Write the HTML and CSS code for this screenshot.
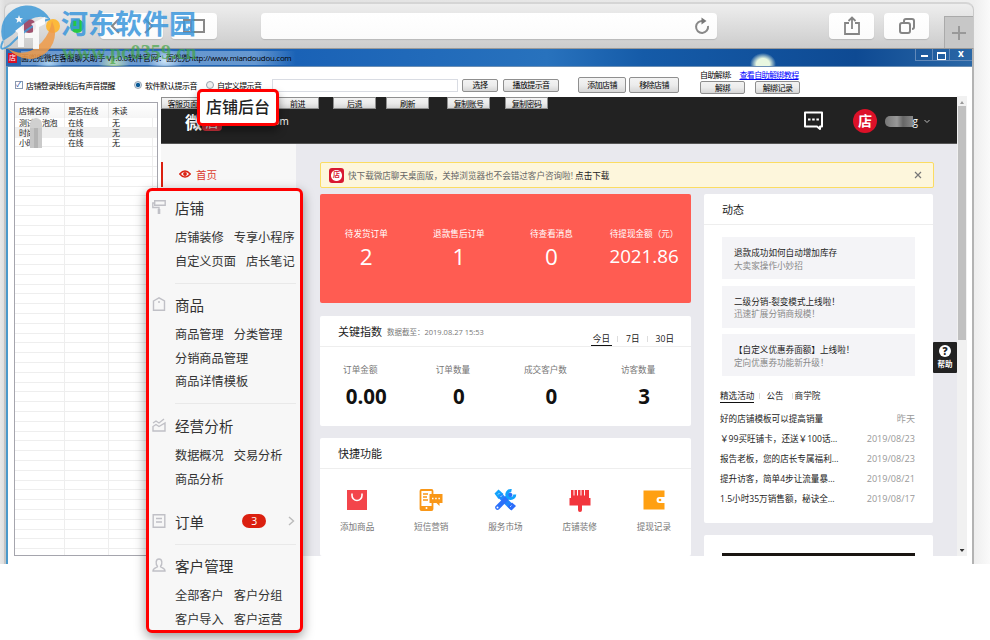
FILE: index.html
```html
<!DOCTYPE html>
<html lang="zh-CN">
<head>
	<meta charset="utf-8">
	<title>店铺后台</title>
	<link rel="stylesheet" href="styles.css">
</head>
<body>
	<div class="browser">
		<div class="chrome">
			<i class="light red"></i>
			<i class="light orange"></i>
			<i class="light green"></i>
			<div class="btn nav">
				<svg width="50" height="20" viewBox="0 0 50 20"><path d="M12 3 5 10l7 7M38 3l7 7-7 7" fill="none" stroke="#888" stroke-width="2"/></svg>
			</div>
			<div class="btn side">
				<svg width="24" height="16" viewBox="0 0 24 16"><path d="M2 2h20v12H2zM9 2v12" fill="none" stroke="#888" stroke-width="2"/></svg>
			</div>
			<div class="btn address">
				<svg width="18" height="18" viewBox="0 0 18 18"><path d="M10 4A6 6 0 1 0 15 9" fill="none" stroke="#888" stroke-width="2"/><path d="M8.500 .5 13.500 4 8.500 7.500z" fill="#777"/></svg>
			</div>
			<div class="btn share">
				<svg width="18" height="20" viewBox="0 0 18 20"><path d="M6 7H2v11h14V7h-4M9 13V2M5.500 5 9 1.500 12.500 5" fill="none" stroke="#858585" stroke-width="1.800"/></svg>
			</div>
			<div class="btn tabs">
				<svg width="18" height="18" viewBox="0 0 18 18"><rect x="2" y="6" width="10" height="10" rx="2" fill="none" stroke="#858585" stroke-width="2"/><path d="M6 5V4q0-2 2-2h6q2 0 2 2v6q0 2-2 2" fill="none" stroke="#858585" stroke-width="2"/></svg>
			</div>
			<div class="newtab">
				<svg width="14" height="14" viewBox="0 0 14 14"><path d="M7 0v14M0 7h14" stroke="#999" stroke-width="2"/></svg>
			</div>
		</div>

		<div class="app">
			<div class="titlebar">
				<span class="logo">店</span>
				<span class="name">面兜兜微店客服聊天助手 V1.0.0软件官网：面兜兜http://www.miandoudou.com</span>
				<span class="win"><b class="min"></b><b class="max"></b><b class="close">x</b></span>
			</div>

			<div class="toolbar">
				<i class="check">✓</i>
				<label class="t1">店铺登录掉线后有声音提醒</label>
				<i class="radio on"></i>
				<label class="t2">软件默认提示音</label>
				<i class="radio"></i>
				<label class="t3">自定义提示音</label>
				<div class="path"></div>
				<button class="b1">选择</button>
				<button class="b2">播放提示音</button>
				<button class="b3">添加店铺</button>
				<button class="b4">移除店铺</button>
				<div class="unbind">
					<p>自助解绑: <a href="javascript:;">查看自助解绑教程</a></p>
					<button>解绑</button><button>解绑记录</button>
				</div>
			</div>

			<div class="work">
				<div class="shops">
					<div class="row head"><span>店铺名称</span><span>是否在线</span><span>未读</span></div>
					<div class="row"><span>测试<em></em>泡泡</span><span>在线</span><span>无</span></div>
					<div class="row sel"><span>时尚<em></em></span><span>在线</span><span>无</span></div>
					<div class="row"><span>小时<em></em></span><span>在线</span><span>无</span></div>
				</div>

				<div class="page">
					<div class="top">
						<div class="tools">
							<button>客服页面</button><button>前进</button><button>后退</button><button>刷新</button><button>复制账号</button><button>复制密码</button>
						</div>
						<div class="brand">
							<span class="wei">微</span><span class="dian">店</span><span class="com">.com</span>
							<svg class="chat" width="21" height="20" viewBox="0 0 21 20"><path d="M2 1.500h17v14h-2v2.500l-3-2.500H2z" fill="none" stroke="#fff" stroke-width="2" stroke-linejoin="round"/><path d="M5 8.500h2.500M9.200 8.500h2.500M13.400 8.500h2.500" stroke="#fff" stroke-width="2.200"/></svg>
							<span class="avatar">店</span>
							<span class="user">g</span>
							<svg class="down" width="6" height="5" viewBox="0 0 6 5"><path d="M.5 1 3 3.500 5.500 1" fill="none" stroke="#bbb"/></svg>
						</div>
					</div>
					<div class="content">
						<div class="home">
							<svg width="12" height="8" viewBox="0 0 12 8"><path d="M.8 4Q6-2.200 11.200 4 6 10.200.8 4z" fill="none" stroke="#db2010" stroke-width="1.500"/><circle cx="6" cy="4" r="1.900" fill="#db2010"/></svg>
							<span>首页</span>
						</div>
						<div class="main">
							<div class="notice">
								<span class="ico">店</span>
								<p>快下载微店聊天桌面版，关掉浏览器也不会错过客户咨询啦! <b>点击下载</b></p>
								<svg width="8" height="8" viewBox="0 0 8 8"><path d="M1 1l6 6M7 1 1 7" stroke="#777" stroke-width="1.200"/></svg>
							</div>
							<div class="cols">
								<div class="left">
									<div class="todo">
										<div><span>待发货订单</span><b>2</b></div>
										<div><span>退款售后订单</span><b>1</b></div>
										<div><span>待查看消息</span><b>0</b></div>
										<div><span>待提现金额（元）</span><b class="money">2021.86</b></div>
									</div>
									<div class="card index">
										<div class="hd"><h3>关键指数</h3><small>数据截至：2019.08.27 15:53</small>
											<div class="days"><span class="on">今日</span><span>7日</span><span>30日</span></div>
										</div>
										<div class="nums">
											<div><span>订单金额</span><b>0.00</b></div>
											<div><span>订单数量</span><b>0</b></div>
											<div><span>成交客户数</span><b>0</b></div>
											<div><span>访客数量</span><b>3</b></div>
										</div>
									</div>
									<div class="card quick">
										<div class="hd"><h3>快捷功能</h3></div>
										<div class="icons">
											<div>
												<svg width="24" height="24" viewBox="0 0 24 24"><path d="M2 2h20v20H2z" fill="#f3454b"/><path d="M7 5.500v2a5 5 0 0 0 10 0v-2" fill="none" stroke="#fff" stroke-width="1.600"/></svg>
												<span>添加商品</span>
											</div>
											<div>
												<svg width="24" height="24" viewBox="0 0 24 24"><rect x="1.500" y="2" width="12" height="20" rx="1" fill="#fff" stroke="#f99717" stroke-width="1.800"/><path d="M1 18h13v4H1z" fill="#f99717"/><circle cx="7.500" cy="20" r="1" fill="#fff"/><path d="M4 6h5M4 9h4M4 12h5" stroke="#f99717" stroke-width="1.400"/><path d="M10.500 6h13v9h-3v3l-3-3h-7z" fill="#f99717"/><path d="M13 10.500h1.500M16.200 10.500h1.500M19.400 10.500h1.500" stroke="#fff" stroke-width="1.500"/></svg>
												<span>短信营销</span>
											</div>
											<div>
												<svg width="24" height="24" viewBox="0 0 24 24"><path d="M1.500 5.500 5.500 1.500l5 4.500-5 5z" fill="#12a2fc"/><path d="M7 7.500 19.500 20" stroke="#1f86fb" stroke-width="5.500"/><path d="M14.500 18.500l4 4 4.500-4.500-4-3.500z" fill="#2b6cfa"/><path d="M4.500 19.500 17 7" stroke="#2b70fa" stroke-width="4.600" stroke-linecap="round"/><path d="M18.500 2.600a4 4 0 1 0 3.300 4" fill="none" stroke="#10a3fc" stroke-width="3"/><circle cx="4.500" cy="19.500" r="1" fill="#fff"/><path d="M6.500 5l-1.500 1.500M9 7.500 7.500 9M18.500 17.500 17 19" stroke="#fff" stroke-width=".7"/></svg>
												<span>服务市场</span>
											</div>
											<div>
												<svg width="24" height="24" viewBox="0 0 24 24"><path d="M3 2h18v8h1.500v7.500H14V22a2 2 0 0 1-4 0v-4.500H1.500V10H3z" fill="#f2353c"/><path d="M6 2v5.500M9.500 2v5.500M13 2v5.500M16.500 2v5.500" stroke="#fff"/></svg>
												<span>店铺装修</span>
											</div>
											<div>
												<svg width="24" height="24" viewBox="0 0 24 24"><path d="M1.500 2.500h21V9h-5a3 3 0 0 0 0 6h5v6.500h-21z" fill="#ffa012"/><circle cx="18" cy="12" r="1.300" fill="#ffa012"/></svg>
												<span>提现记录</span>
											</div>
										</div>
									</div>
								</div>
								<div class="right">
									<div class="card news">
										<div class="hd"><h3>动态</h3></div>
										<div class="tips">
											<div><p>退款成功如何自动增加库存</p><span>大卖家操作小妙招</span></div>
											<div><p>二级分销-裂变模式上线啦！</p><span>迅速扩展分销商规模！</span></div>
											<div><p>【自定义优惠券面额】上线啦！</p><span>定向优惠券功能新升级！</span></div>
										</div>
										<div class="tabs2"><span class="on">精选活动</span><span>公告</span><span>商学院</span></div>
										<ul>
											<li>好的店铺模板可以提高销量<time>昨天</time></li>
											<li>￥99买旺铺卡，还送￥100话...<time>2019/08/23</time></li>
											<li>报告老板，您的店长专属福利...<time>2019/08/23</time></li>
											<li>提升访客，简单4步让流量暴...<time>2019/08/21</time></li>
											<li>1.5小时35万销售额，秘诀全...<time>2019/08/17</time></li>
										</ul>
									</div>
									<div class="card banner"><div></div></div>
								</div>
							</div>
						</div>
					</div>
				</div>
				<div class="scroll"><i class="up"></i><div class="thumb"></div><i class="dn"></i></div>
			</div>
		</div>
	</div>

	<div class="help"><b>?</b><span>帮助</span></div>

	<div class="menu">
		<div class="sec s1">
			<h4><svg width="14" height="14" viewBox="0 0 14 14"><path d="M2.700.8h10.500v4.400H2.700zM2.700 3H.8v4.500H7V10" fill="none" stroke="#c0c0c6" stroke-width="1.400"/><path d="M7 9v5" stroke="#c0c0c6" stroke-width="2.600"/></svg>店铺</h4>
			<p><a>店铺装修</a><a>专享小程序</a></p>
			<p><a>自定义页面</a><a>店长笔记</a></p>
		</div>
		<div class="sec s2">
			<h4><svg width="14" height="14" viewBox="0 0 14 14"><path d="M1.500 4 7 .8 12.500 4v9.200h-11z" fill="none" stroke="#c0c0c6" stroke-width="1.400"/><circle cx="7" cy="5" r="1" fill="#c0c0c6"/></svg>商品</h4>
			<p><a>商品管理</a><a>分类管理</a></p>
			<p><a>分销商品管理</a></p>
			<p><a>商品详情模板</a></p>
		</div>
		<div class="sec s3">
			<h4><svg width="14" height="14" viewBox="0 0 14 14"><path d="M1 5l3-2 3 2 5-4M1 13V8.500L4 6.500 7 8.500 13 5v8z" fill="none" stroke="#c0c0c6" stroke-width="1.400"/></svg>经营分析</h4>
			<p><a>数据概况</a><a>交易分析</a></p>
			<p><a>商品分析</a></p>
		</div>
		<div class="sec s4">
			<h4><svg width="14" height="14" viewBox="0 0 14 14"><path d="M1.200.8h11.600v12.400H1.200zM4 4.500h6M4 8h6" fill="none" stroke="#c0c0c6" stroke-width="1.400"/></svg>订单<span class="count">3</span><svg class="go" width="7" height="10" viewBox="0 0 7 10"><path d="M1 1l4.500 4L1 9" fill="none" stroke="#bbb" stroke-width="1.400"/></svg></h4>
		</div>
		<div class="sec s5">
			<h4><svg width="14" height="14" viewBox="0 0 14 14"><path d="M5.500 8.500C3.500 6 3.500 1 7 1s3.500 5 1.500 7.500c0 1.500 4.500 1 4.500 4.500H1c0-3.500 4.500-3 4.500-4.500z" fill="none" stroke="#c0c0c6" stroke-width="1.400"/></svg>客户管理</h4>
			<p><a>全部客户</a><a>客户分组</a></p>
			<p><a>客户导入</a><a>客户运营</a></p>
		</div>
	</div>

	<div class="callout">店铺后台</div>

	<div class="mark">
		<svg width="58" height="58" viewBox="0 0 58 58">
			<path d="M3 37A26 26 0 0 1 50 15Q34 8 20 24 12 32 3 37z" fill="#3f9ad8"/>
			<path d="M7 44Q26 56 42 38 50 29 52 17 60 34 47 48 27 64 7 44z" fill="#f09b48"/>
			<path d="M3 37Q-3 50 10 41 30 20 50 15" fill="none" stroke="#3f9ad8" stroke-width="2"/>
			<path d="M15 27l9-7v23h-6V29zM31 20l14-7v7l-6 3v22h-6V34h-8v-5h8v-7z" fill="#fff"/>
			<path d="M19 11l1 3 3 .2-2.300 1.800.8 3-2.500-1.700-2.500 1.700.8-3-2.300-1.800 3-.2z" fill="#fff"/>
		</svg>
		<div class="cn">河东软件园</div>
		<div class="url">www.pc0359.cn</div>
	</div>
</body>
</html>
```
FILE: styles.css
```css
* {
	margin: 0;
	padding: 0;
	box-sizing: border-box;
}
body {
	position: relative;
	width: 990px;
	height: 640px;
	overflow: hidden;
	background: #fff;
	font-family: "Open Sans", "Noto Sans CJK SC", sans-serif;
	font-size: 8.6px;
	color: #222;
	white-space: nowrap;
}
i, em {
	font-style: normal;
}
svg {
	flex: none;
}
ul {
	list-style: none;
}
.browser {
	width: 990px;
	height: 564px;
	padding: 2px 15px 0 4px;
	background: linear-gradient(90deg, #e8e8e8 0, #ddd 5px, #eee 974px, #fafafa 990px);
}
.chrome {
	display: flex;
	align-items: center;
	width: 970px;
	height: 47px;
	padding-left: 17px;
	border: 1px solid #c9c9c9;
	border-top: 2px solid #d5d5d5;
	border-bottom: 1px solid #999;
	border-radius: 8px 8px 0 0;
	background: linear-gradient(#eee, #ccc);
}
.light {
	width: 14px;
	height: 14px;
	border-radius: 50%;
	margin-right: 10px;
}
.light.red {
	background: #a0506e;
}
.light.orange {
	background: #fcb93b;
}
.light.green {
	background: #26c843;
}
.btn {
	display: flex;
	align-items: center;
	justify-content: center;
	height: 26px;
	border-radius: 4px;
	background: linear-gradient(#fff, #fbfbfb);
	box-shadow: 0 1px 1px rgba(0, 0, 0, .12);
}
.btn.nav {
	width: 63px;
	margin-left: 6px;
}
.btn.side {
	width: 46px;
	margin-left: 8px;
}
.btn.address {
	justify-content: flex-end;
	width: 456px;
	margin-left: 44px;
	padding-right: 6px;
}
.btn.share {
	width: 45px;
	margin-left: 112px;
}
.btn.tabs {
	width: 45px;
	margin-left: 10px;
}
.newtab {
	display: flex;
	align-items: center;
	justify-content: center;
	align-self: flex-end;
	width: 29px;
	height: 32px;
	margin-left: 15px;
	border: 1px solid #aaa;
	border-bottom: 0;
	border-right: 0;
	background: #c7c7c7;
}
.app {
	width: 970px;
	height: 515px;
	border-left: 2px solid #c4c4c4;
	border-right: 2px solid #b3b3b3;
	background: #fff;
	box-shadow: inset 2px 0 #4a98ca;
}
.titlebar {
	display: flex;
	align-items: center;
	height: 18px;
	padding-left: 2px;
	border-bottom: 1px solid #6b8fb5;
	background: radial-gradient(ellipse 16px 9px at 108px 14px, #c2e58d, transparent), radial-gradient(ellipse 18px 12px at 159px 12px, #d7efff, transparent), radial-gradient(ellipse 14px 9px at 43px 14px, #9dcdf1, transparent), radial-gradient(ellipse 13px 11px at 757px 15px, #e8f7e0 50%, transparent), linear-gradient(90deg, #2a67b2, #1a62b6 30%, #2872bd 56%, #155ba8 66%, #0e4a93 88%, #2a67a6);
}
.logo {
	width: 9px;
	height: 10px;
	background: #d7112a;
	color: #fff;
	font-size: 7px;
	line-height: 10px;
	text-align: center;
}
.name {
	width: 275px;
	margin-left: 4px;
	background: linear-gradient(90deg, rgba(190, 215, 240, .45) 85%, rgba(190, 215, 240, 0));
	color: #000;
	font-size: 7.900px;
	letter-spacing: -.25px;
	line-height: 14px;
}
.win {
	display: flex;
	align-self: flex-start;
	height: 12px;
	margin-left: auto;
	border: 1px solid #6289b9;
	border-top: 0;
	border-right: 0;
}
.win b {
	width: 17px;
	border-right: 1px solid #6289b9;
	color: #fff;
}
.win .min::after, .win .max::after {
	content: "";
	display: block;
	width: 7px;
	height: 2px;
	margin: 6px auto 0;
	background: #fff;
}
.win .max::after {
	height: 5px;
	margin-top: 3px;
	border: 1px solid #fff;
	border-top-width: 2px;
	background: none;
}
.win .close {
	width: 22px;
	border: 0;
	font-size: 10px;
	line-height: 9px;
	text-align: center;
}
.toolbar {
	display: flex;
	align-items: center;
	height: 29px;
	padding: 7px 0 0 9px;
}
.toolbar > * {
	flex: none;
}
.check {
	width: 8px;
	height: 8px;
	border: 1px solid #8a9ab0;
	color: #23439a;
	font-size: 7px;
	line-height: 6px;
}
.toolbar label {
	font-size: 8px;
	letter-spacing: -.6px;
	margin-left: 3px;
	color: #000;
}
.t1 {
	width: 108px;
}
.t2 {
	width: 61px;
}
.t3 {
	width: 55px;
}
.radio {
	width: 8px;
	height: 8px;
	border: 1px solid #9aa4ae;
	border-radius: 50%;
	background: #eee;
}
.radio.on {
	background: radial-gradient(circle, #0a5a96 40%, #cde 60%);
}
.path {
	width: 186px;
	height: 13px;
	border: 1px solid #d9dce3;
	margin-right: 4px;
}
button {
	display: block;
	flex: none;
	height: 13px;
	border: 1px solid #8f8f8f;
	border-radius: 2px;
	background: linear-gradient(#f3f3f3, #ececec 50%, #d6d6d6);
	color: #000;
	font-family: inherit;
	font-size: 8px;
	letter-spacing: -.6px;
	line-height: 10px;
}
.b1 {
	width: 36px;
	margin-right: 5px;
}
.b2 {
	width: 56px;
	margin-right: 19px;
}
.b3, .b4 {
	width: 48px;
	height: 16px;
	margin-right: 3px;
}
.b4 {
	width: 50px;
}
.unbind {
	display: flex;
	flex-wrap: wrap;
	column-gap: 10px;
	width: 120px;
	margin: -8px 0 0 18px;
}
.unbind p {
	width: 120px;
	line-height: 13px;
	font-size: 8px;
	letter-spacing: -.62px;
	color: #000;
}
.unbind a {
	margin-left: 7px;
	color: #00f;
}
.unbind button {
	width: 45px;
}
.work {
	display: flex;
	height: 468px;
	padding-left: 8px;
}
.shops {
	width: 144px;
	height: 454px;
	margin-top: 6px;
	border: 1px solid #a5a5ad;
	background: linear-gradient(#eee, #eee) 49px 0 / 1px 100% no-repeat, linear-gradient(#eee, #eee) 93px 0 / 1px 100% no-repeat, linear-gradient(#eee, #eee) 137px 0 / 1px 100% no-repeat, repeating-linear-gradient(#fff 0, #fff 8.800px, #eee 8.800px, #eee 9.800px) 0 15px;
}
.row {
	display: grid;
	grid-template-columns: 49px 44px 44px;
	height: 9.800px;
	padding-left: 4px;
	font-size: 8px;
	letter-spacing: -.5px;
	line-height: 10px;
}
.row.head {
	height: 15px;
	line-height: 16px;
	background: linear-gradient(90deg, transparent 49px, #e6e6e6 49px 50px, transparent 50px 93px, #e6e6e6 93px 94px, transparent 94px), linear-gradient(#fff, #f5f5f5);
}
.row.sel {
	background: #f0f0f0;
}
.row em {
	display: inline-block;
	width: 12px;
	height: 10px;
	margin-left: -4px;
	background: linear-gradient(90deg, #c6c6c6 4px, #b4b4b4 4px 8px, #cacaca 8px);
	vertical-align: top;
}
.row:nth-child(2) em {
	border-radius: 6px 6px 0 0;
	background: #d0d0d0;
}
.page {
	width: 796px;
	height: 460px;
	margin-left: 3px;
	overflow: hidden;
}
.top {
	height: 47px;
	margin-top: 1px;
	background: #222;
	border-bottom: 1px solid #555;
}
.tools {
	display: flex;
	height: 12px;
}
.tools button {
	width: 43px;
	height: 12px;
	margin-right: 10px;
	border-radius: 0;
	line-height: 9px;
}
.tools button:nth-child(1) {
	margin-right: 72px;
}
.tools button:nth-child(2) {
	margin-right: 14px;
}
.tools button:nth-child(4) {
	margin-right: 18px;
}
.tools button:nth-child(5) {
	margin-right: 15px;
}
.brand {
	display: flex;
	align-items: center;
	height: 24px;
	padding-left: 24px;
	color: #fff;
}
.wei {
	flex: none;
	width: 17px;
	font-size: 17px;
	font-weight: bold;
}
.dian {
	flex: none;
	height: 19px;
	width: 20px;
	border-radius: 4px;
	background: #d6333e;
	text-align: center;
	font-size: 13px;
}
.com {
	flex: none;
	width: 30px;
	margin-left: 44px;
	font-size: 10px;
}
.chat {
	margin-left: 507px;
}
.avatar {
	flex: none;
	width: 24px;
	height: 24px;
	margin-left: 29px;
	border-radius: 50%;
	background: #dc1128;
	font-size: 14px;
	font-weight: bold;
	line-height: 23px;
	text-align: center;
}
.user {
	flex: none;
	width: 33px;
	height: 11px;
	margin-left: 8px;
	border-radius: 5px 0 0 5px;
	background: linear-gradient(90deg, #777, #999 12px, #666 18px, #888 28px, transparent 28px);
	font-size: 10px;
	line-height: 10px;
	text-align: right;
}
.down {
	margin-left: 6px;
}
.content {
	display: flex;
	height: 412px;
	background: #e9e9ee;
}
.home {
	display: flex;
	align-items: center;
	width: 135px;
	height: 100%;
	padding: 0 0 352px 18px;
	background: linear-gradient(#db2010, #db2010) 0 18px / 2px 25px no-repeat #f7f7f7;
	color: #db3a2c;
	font-size: 10.500px;
}
.home span {
	margin-left: 5px;
}
.main {
	padding: 18px 0 0 24px;
}
.notice {
	display: flex;
	align-items: center;
	width: 614px;
	height: 26px;
	padding: 0 11px 0 8px;
	border: 1px solid #fbdc62;
	border-radius: 2px;
	background: #fdf6dc;
	color: #666;
}
.notice p {
	letter-spacing: -.03px;
}
.notice .ico {
	width: 15px;
	height: 15px;
	margin-right: 4px;
	border: 2px solid #d81831;
	border-radius: 3px;
	background: radial-gradient(circle, #fff 5px, #d81831 6px);
	color: #d81831;
	font-size: 7px;
	font-weight: bold;
	line-height: 10px;
	text-align: center;
}
.notice b {
	font-weight: normal;
	color: #222;
}
.notice svg {
	margin-left: auto;
}
.cols {
	display: flex;
	gap: 13px;
	margin-top: 6px;
}
.left {
	width: 371px;
}
.right {
	width: 229px;
}
.todo {
	display: flex;
	height: 109px;
	padding: 33px 0 0;
	border-radius: 2px;
	background: #ff5c52;
	color: #fff;
}
.todo div, .nums div {
	display: flex;
	flex-direction: column;
	align-items: center;
	width: 92.600px;
}
.todo span {
	line-height: 14px;
}
.todo b {
	font-size: 22.500px;
	font-weight: normal;
	line-height: 31px;
}
.todo .money {
	font-size: 18.800px;
	line-height: 30px;
}
.card {
	border-radius: 2px;
	background: #fff;
}
.hd {
	display: flex;
	align-items: center;
	height: 31px;
	padding-left: 18px;
	border-bottom: 1px solid #eee;
}
.hd h3 {
	font-size: 11px;
	font-weight: normal;
}
.hd small {
	margin-left: 5px;
	color: #777;
	font-size: 7.500px;
}
.index {
	height: 110px;
	margin-top: 13px;
}
.days {
	display: flex;
	align-self: flex-end;
	margin-left: auto;
	margin-right: 15px;
	line-height: 13px;
}
.days span {
	height: 12px;
	padding: 0 2px;
}
.days span + span::before {
	content: "";
	display: inline-block;
	width: 1px;
	height: 6px;
	margin: 0 8px 0 3px;
	background: #ddd;
}
.days .on {
	height: 13px;
	border-bottom: 1px solid #111;
}
.nums {
	display: flex;
	padding-top: 15px;
}
.nums span, .icons span {
	color: #777;
	line-height: 16px;
}
.nums span {
	margin-left: -12px;
}
.nums b {
	font-size: 20.500px;
	line-height: 37px;
	color: #111;
}
.quick {
	height: 118px;
	margin-top: 12px;
}
.icons {
	display: flex;
	padding-top: 19px;
}
.icons div {
	display: flex;
	flex-direction: column;
	align-items: center;
	gap: 6.500px;
	width: 74.200px;
}
.news {
	height: 329px;
}
.tips {
	padding: 12px 18px 0;
}
.tips div {
	height: 42px;
	margin-bottom: 6.500px;
	padding: 10px 12px 0;
	background: #f4f4f7;
	line-height: 12.500px;
}
.tips span {
	color: #888;
}
.tabs2 {
	display: flex;
	height: 16px;
	margin: 11px 0 0 16px;
	line-height: 18px;
}
.tabs2 span + span::before {
	content: "";
	display: inline-block;
	width: 1px;
	height: 6px;
	margin: 0 6px 0 5px;
	background: #ddd;
}
.tabs2 span + span + span::before {
	margin: 0 2px 0 8px;
}
.tabs2 .on {
	border-bottom: 1px solid #111;
}
.news ul {
	padding: 6px 18px 0 16px;
}
.news li {
	display: flex;
	justify-content: space-between;
	line-height: 20.100px;
}
.news time {
	color: #999;
	font-size: 9.100px;
}
.banner {
	height: 40px;
	margin-top: 12px;
	padding: 18px 18px 0;
}
.banner div {
	height: 20px;
	background: #1a1512;
}
.scroll {
	display: flex;
	flex-direction: column;
	align-items: center;
	width: 10px;
	height: 460px;
	background: #f1f1f1;
}
.scroll i {
	width: 4px;
	height: 3px;
	margin: 5px 0 2px;
	background: #999;
	clip-path: polygon(50% 0, 100% 100%, 0 100%);
}
.scroll .thumb {
	width: 8px;
	height: 234px;
	background: #c0c0c0;
}
.scroll .dn {
	margin: auto 0 4px;
	width: 5px;
	background: #333;
	clip-path: polygon(0 0, 100% 0, 50% 100%);
}
.help {
	position: absolute;
	left: 933px;
	top: 342px;
	display: flex;
	flex-direction: column;
	align-items: center;
	width: 24px;
	height: 31px;
	padding-top: 3px;
	border-radius: 1px;
	background: #222;
	color: #fff;
	font-size: 7.500px;
	font-weight: bold;
}
.help b {
	width: 12px;
	height: 12px;
	border-radius: 50%;
	background: #fff;
	color: #222;
	font-size: 10px;
	line-height: 12px;
	text-align: center;
}
.help span {
	line-height: 14px;
}
.menu {
	position: absolute;
	left: 146px;
	top: 188px;
	width: 157px;
	height: 445px;
	border: 3px solid #f00;
	border-radius: 6px;
	background: #f7f7f7;
	box-shadow: 0 4px 12px rgba(0, 0, 0, .4);
	color: #333;
}
.sec {
	padding-left: 26px;
}
.sec h4 {
	display: flex;
	align-items: center;
	height: 35px;
	margin-left: -23px;
	padding-bottom: 2.500px;
	font-size: 14.600px;
	font-weight: normal;
}
.sec h4 svg:first-child {
	margin-right: 9px;
}
.sec p {
	display: flex;
	gap: 10px;
	font-size: 12.200px;
	line-height: 23.500px;
}
.s1, .s2, .s4 {
	background: linear-gradient(#e9e9e9, #e9e9e9) 26px 100% / 121px 1px no-repeat;
}
.s1 {
	height: 93px;
}
.s2 {
	height: 120px;
	padding-top: 4px;
}
.s3 {
	padding-top: 5px;
	height: 101px;
}
.s4 {
	height: 40px;
}
.s5 {
	padding-top: 4px;
}
.count {
	width: 24px;
	height: 14px;
	margin-left: 38px;
	border-radius: 7px;
	background: #db2010;
	color: #fff;
	font-size: 10.500px;
	line-height: 14px;
	text-align: center;
}
.go {
	margin-left: 22px;
}
.callout {
	position: absolute;
	left: 197px;
	top: 89px;
	width: 82px;
	height: 37px;
	border: 3px solid #f00;
	border-radius: 5px;
	background: #fff;
	box-shadow: 0 5px 9px rgba(0, 0, 0, .4);
	font-size: 16px;
	font-weight: 500;
	line-height: 30px;
	text-align: center;
}
.mark {
	position: absolute;
	left: 0;
	top: 4px;
	opacity: .85;
}
.cn {
	position: absolute;
	left: 61px;
	top: 0;
	color: #3b97dc;
	font-size: 27px;
	font-weight: bold;
	line-height: 40px;
}
.url {
	position: absolute;
	left: 62px;
	top: 36px;
	color: #44a544;
	opacity: .8;
	font-family: "Liberation Serif", serif;
	font-size: 20px;
	font-weight: bold;
	letter-spacing: .2px;
	line-height: 24px;
}
```
